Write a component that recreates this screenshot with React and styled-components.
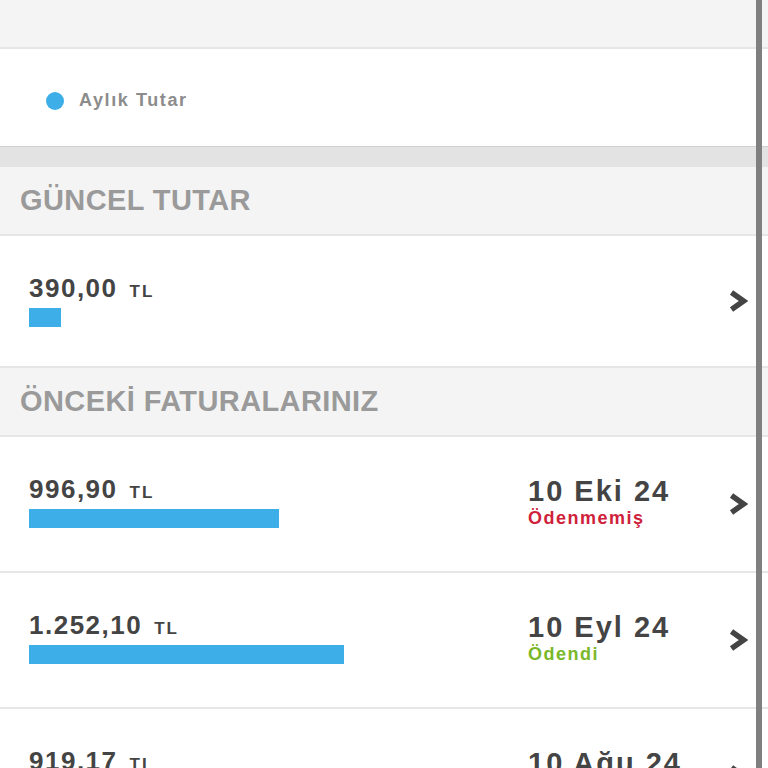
import React from 'react';
import styled, { createGlobalStyle, css } from 'styled-components';

const GlobalStyle = createGlobalStyle`
  html, body {
    margin: 0;
    padding: 0;
    background: #fff;
    font-family: "Liberation Sans", Arial, sans-serif;
    overflow: hidden;
  }
`;

const Page = styled.div`
  width: 768px;
  height: 768px;
  overflow: hidden;
  position: relative;
  background: #fff;
`;

const TopBand = styled.div`
  height: 47px;
  background: #f4f4f4;
  border-bottom: 2px solid #e6e6e6;
`;

const Legend = styled.div`
  height: 98px;
  display: flex;
  align-items: center;
  padding: 6px 0 0 46px;
  box-sizing: border-box;
  border-bottom: 1px solid #d0d0d0;
`;

const Dot = styled.span`
  width: 18px;
  height: 18px;
  border-radius: 50%;
  background: #3eaee8;
  margin-right: 15px;
`;

const LegendText = styled.span`
  font-size: 18px;
  font-weight: bold;
  color: #8c8c8c;
  letter-spacing: 1.6px;
`;

const Gap = styled.div`
  height: 20px;
  background: #e3e3e3;
`;

const SectionHeader = styled.div`
  height: 67px;
  display: flex;
  align-items: center;
  padding-left: 20px;
  background: #f4f4f4;
  border-bottom: 2px solid #e6e6e6;
  font-size: 29px;
  font-weight: bold;
  color: #9a9a9a;
  letter-spacing: 0.4px;
`;

const Row = styled.div`
  height: ${p => p.h}px;
  display: flex;
  align-items: flex-start;
  padding: 37px 20px 0 29px;
  box-sizing: border-box;
  border-bottom: 2px solid #e6e6e6;
  position: relative;
`;

const AmountCol = styled.div`
  flex: 1;
`;

const Amount = styled.div`
  display: flex;
  align-items: baseline;
  line-height: 30px;
  color: #444;
  font-weight: bold;
`;

const Value = styled.span`
  font-size: 26px;
  letter-spacing: 1.5px;
  margin-right: 12px;
`;

const Unit = styled.span`
  font-size: 17px;
  letter-spacing: 2px;
`;

const Bar = styled.div`
  height: 19px;
  margin-top: 1px;
  background: #3eaee8;
`;

const DateCol = styled.div`
  width: 180px;
  margin-top: 1px;
`;

const DateText = styled.div`
  font-size: 29px;
  line-height: 32px;
  font-weight: bold;
  color: #444;
  letter-spacing: 2px;
`;

const Status = styled.div`
  font-size: 18px;
  line-height: 22px;
  font-weight: bold;
  letter-spacing: 1.5px;
  color: #7ab82a;
  ${p => p.unpaid && css`
    color: #d0213b;
  `}
`;

const Chevron = styled.div`
  align-self: center;
  width: 20px;
  height: 24px;
  margin-top: -37px;
  margin-left: 20px;
  display: flex;
`;

const ScrollBar = styled.div`
  position: absolute;
  top: 0;
  right: 6px;
  width: 6px;
  height: 100%;
  background: #7f7f7f;
`;

function ChevronIcon() {
  return (
    <Chevron>
      <svg width="20" height="24" viewBox="0 0 20 24">
        <path d="M3.5 3.5 L15.5 12 L3.5 20.5" fill="none" stroke="#444" strokeWidth="5.5" strokeLinejoin="miter" />
      </svg>
    </Chevron>
  );
}

const bills = [
  { amount: '996,90', width: 250, date: '10 Eki 24', status: 'Ödenmemiş', unpaid: true },
  { amount: '1.252,10', width: 315, date: '10 Eyl 24', status: 'Ödendi' },
  { amount: '919,17', width: 230, date: '10 Ağu 24', status: 'Ödendi' },
];

function BillRow({ bill }) {
  return (
    <Row h={136}>
      <AmountCol>
        <Amount>
          <Value>{bill.amount}</Value>
          <Unit>TL</Unit>
        </Amount>
        <Bar style={{ width: bill.width }} />
      </AmountCol>
      <DateCol>
        <DateText>{bill.date}</DateText>
        <Status unpaid={bill.unpaid}>{bill.status}</Status>
      </DateCol>
      <ChevronIcon />
    </Row>
  );
}

export default function App() {
  return (
    <Page>
      <GlobalStyle />
      <TopBand />
      <Legend>
        <Dot />
        <LegendText>Aylık Tutar</LegendText>
      </Legend>
      <Gap />
      <SectionHeader>GÜNCEL TUTAR</SectionHeader>
      <Row h={132}>
        <AmountCol>
          <Amount>
            <Value>390,00</Value>
            <Unit>TL</Unit>
          </Amount>
          <Bar style={{ width: 32 }} />
        </AmountCol>
        <ChevronIcon />
      </Row>
      <SectionHeader>ÖNCEKİ FATURALARINIZ</SectionHeader>
      {bills.map(b => <BillRow key={b.date} bill={b} />)}
      <ScrollBar />
    </Page>
  );
}
